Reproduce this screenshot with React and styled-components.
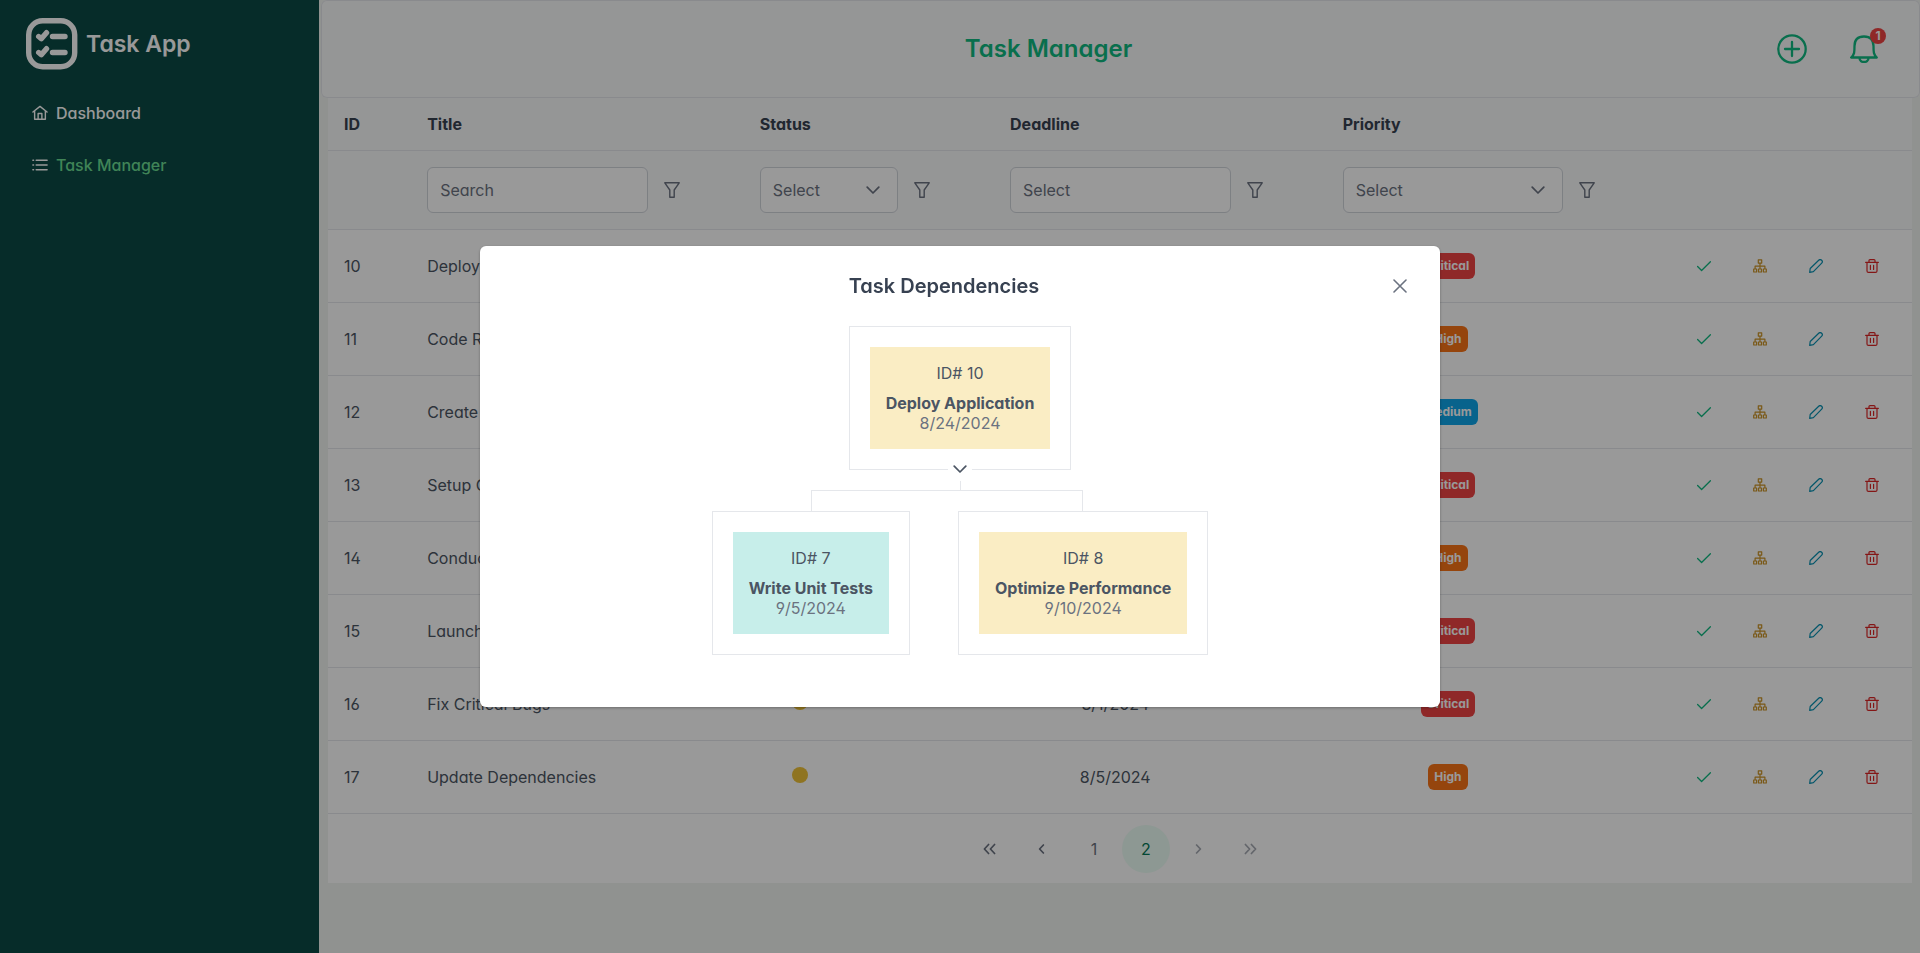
import React from "react";
import styled, { createGlobalStyle } from "styled-components";

const Global = createGlobalStyle`
  *, *::before, *::after { box-sizing: border-box; }
  body {
    margin: 0;
    background: #f1f4f0;
    color: #4b5563;
    font-family: Inter, "Liberation Sans", sans-serif;
    font-feature-settings: "cv02", "cv03", "cv04", "cv11";
    font-size: 16px;
    line-height: 24px;
  }
  button, input, select {
    font: inherit;
    font-feature-settings: inherit;
    color: inherit;
  }
`;

const Shell = styled.div`
  display: flex;
  min-height: 100vh;
`;

const Sidebar = styled.aside`
  flex: none;
  width: 319px;
  padding: 18px 26px;
  background: #0a4a45;
  color: #ffffff;
`;

const Brand = styled.div`
  display: flex;
  align-items: center;
  gap: 8px;
  height: 52px;
  margin-bottom: 17px;
  font-size: 23px;
  font-weight: 600;
`;

const Nav = styled.nav`
  display: flex;
  flex-direction: column;
`;

const NavLink = styled.a`
  display: flex;
  align-items: center;
  gap: 8px;
  height: 52px;
  padding: 0 6px;
  color: #ffffff;
  font-weight: 500;
  text-decoration: none;
  span { color: ${(p) => (p.$active ? "#6bdc92" : "inherit")}; }
`;

const Main = styled.main`
  flex: 1;
  min-width: 0;
  padding-left: 2px;
`;

const TopBar = styled.header`
  display: flex;
  align-items: center;
  height: 98px;
  padding: 0 20px;
  border-radius: 6px;
  background: #f9fafb;
  box-shadow: inset 0 0 0 1px #e5e7eb;
`;

const PageTitle = styled.h1`
  flex: 1;
  margin: 0;
  color: #10b981;
  font-size: 24px;
  font-weight: 600;
  text-align: center;
`;

const BarButton = styled.button`
  display: flex;
  justify-content: center;
  align-items: center;
  width: 72px;
  height: 56px;
  padding: 0;
  border: 0;
  background: transparent;
  color: #10b981;
`;

const BellWrap = styled.span`
  position: relative;
  display: flex;
`;

const Badge = styled.span`
  position: absolute;
  top: -7px;
  right: -8px;
  width: 16px;
  height: 16px;
  border-radius: 50%;
  background: #ef4444;
  color: #ffffff;
  font-size: 12px;
  font-weight: 700;
  line-height: 16px;
  text-align: center;
`;

const Card = styled.section`
  margin: 0 8px 0 7px;
  background: #ffffff;
`;

const Table = styled.table`
  width: 100%;
  table-layout: fixed;
  border-collapse: separate;
  border-spacing: 0;
`;

const HeadCell = styled.th`
  height: ${(p) => (p.$filter ? 79 : 53)}px;
  padding: 0 16px;
  border-bottom: 1px solid #e5e7eb;
  background: #f9fafb;
  color: #374151;
  font-weight: ${(p) => (p.$filter ? 400 : 700)};
  text-align: left;
`;

const Cell = styled.td`
  height: 73px;
  padding: 0 16px;
  border-bottom: 1px solid #e5e7eb;
`;

const Centered = styled.div`
  display: flex;
  justify-content: center;
  width: ${(p) => (p.$narrow ? "80px" : "70%")};
`;

const Dot = styled.span`
  width: 16px;
  height: 16px;
  margin-bottom: 4px;
  border-radius: 50%;
  background: #eec137;
`;

const Tag = styled.span`
  padding: 4px 6px;
  border-radius: 6px;
  background: ${(p) => p.$color};
  color: #ffffff;
  font-size: 12px;
  font-weight: 700;
  line-height: 18px;
`;

const Filter = styled.div`
  display: flex;
  align-items: center;
  padding-right: 32px;
`;

const Field = styled.div`
  position: relative;
  flex: 1;
  min-width: 0;
  color: #6b7280;
  svg {
    position: absolute;
    top: 16px;
    right: 18px;
    pointer-events: none;
  }
`;

const TextInput = styled.input`
  display: block;
  width: 100%;
  height: 46px;
  padding: 0 12px;
  border: 1px solid #d1d5db;
  border-radius: 6px;
  background: #ffffff;
  &::placeholder { color: #6b7280; opacity: 1; }
`;

const SelectInput = styled.select`
  display: block;
  width: 100%;
  height: 46px;
  padding: 0 12px;
  border: 1px solid #d1d5db;
  border-radius: 6px;
  background: #ffffff;
  appearance: none;
`;

const IconButton = styled.button`
  display: flex;
  justify-content: center;
  align-items: center;
  flex: none;
  width: 48px;
  height: 40px;
  padding: 0;
  border: 0;
  background: transparent;
  color: ${(p) => p.$color || "#6b7280"};
`;

const Actions = styled.div`
  display: flex;
  justify-content: flex-end;
  gap: 8px;
`;

const Paginator = styled.nav`
  display: flex;
  justify-content: center;
  align-items: center;
  gap: 4px;
  height: 69px;
`;

const PageButton = styled.button`
  display: flex;
  justify-content: center;
  align-items: center;
  width: 48px;
  height: 48px;
  padding: 0;
  border: 0;
  border-radius: 50%;
  background: ${(p) => (p.$active ? "#ecfdf5" : "transparent")};
  color: ${(p) => (p.$active ? "#047857" : "#6b7280")};
  &:disabled { opacity: 0.6; }
`;

const Mask = styled.div`
  position: fixed;
  inset: 0;
  display: flex;
  justify-content: center;
  align-items: center;
  background: rgba(0, 0, 0, 0.4);
`;

const Dialog = styled.div`
  width: 50%;
  border-radius: 6px;
  background: #ffffff;
  box-shadow: 0 1px 3px rgba(0, 0, 0, 0.3);
`;

const DialogHeader = styled.header`
  display: flex;
  align-items: center;
  height: 80px;
  padding: 0 16px;
`;

const DialogTitle = styled.h2`
  flex: 1;
  margin: 0;
  padding-left: 16px;
  color: #374151;
  font-size: 20px;
  font-weight: 600;
  text-align: center;
`;

const Chart = styled.div`
  display: flex;
  flex-direction: column;
  align-items: center;
  padding-bottom: 52px;
`;

const Node = styled.div`
  position: relative;
  padding: 20px;
  border: 1px solid #e5e7eb;
`;

const NodeBody = styled.div`
  padding: 16px;
  background: ${(p) => p.$color};
  line-height: 20px;
  text-align: center;
`;

const NodeId = styled.div`
  margin-bottom: 10px;
`;

const NodeName = styled.div`
  font-weight: 700;
`;

const NodeDate = styled.div`
  color: #6b7280;
`;

const Toggler = styled.button`
  position: absolute;
  bottom: -12px;
  left: 50%;
  z-index: 1;
  display: flex;
  justify-content: center;
  align-items: center;
  width: 24px;
  height: 24px;
  margin-left: -12px;
  padding: 0;
  border: 0;
  border-radius: 50%;
  background: #ffffff;
`;

const Stem = styled.div`
  width: 1px;
  height: 20px;
  background: #e5e7eb;
`;

const Branches = styled.div`
  display: flex;
`;

const Branch = styled.div`
  display: flex;
  flex-direction: column;
  align-items: center;
  & > ${Node} { margin: 0 24px; }
`;

const Elbow = styled.div`
  align-self: ${(p) => (p.$side === "left" ? "flex-end" : "flex-start")};
  width: 50%;
  height: 21px;
  border-top: 1px solid #e5e7eb;
  border-left: ${(p) => (p.$side === "left" ? "1px solid #e5e7eb" : "0")};
  border-right: ${(p) => (p.$side === "right" ? "1px solid #e5e7eb" : "0")};
`;

const Icon = ({ size = 14, width = 1, box = 14, children }) => (
  <svg width={size} height={size} viewBox={`0 0 ${box} ${box}`} fill="none" stroke="currentColor"
    strokeWidth={width} strokeLinecap="round" strokeLinejoin="round" aria-hidden="true">
    {children}
  </svg>
);

const Logo = () => (
  <Icon size={52} box={52} width={5.4}>
    <rect x="2.700" y="2.700" width="46" height="46" rx="14" />
    <path d="M12.700 18.500l2.600 2.200 5.200-6M12.700 34.500l2.600 2.200 5.200-6M26.500 18.500h12.500M26.500 34.500h12.500" />
  </Icon>
);
const HomeIcon = () => (
  <Icon size={16} box={17} width={1.500}>
    <path d="M1 7.500L8.500 1.500 16 7.500M2.800 6.300V15.200H14.200V6.300M6.500 15V9h4v6" />
  </Icon>
);
const ListIcon = () => (
  <Icon size={16} box={17} width={1.700}>
    <path d="M4.500 3.500H16M4.500 8.500H16M4.500 13.500H16M1 3.500h.6M1 8.500h.6M1 13.500h.6" />
  </Icon>
);
const PlusIcon = () => (
  <Icon size={30} box={30} width={2.300}>
    <circle cx="15" cy="15" r="13.700" />
    <path d="M15 8v14M8 15h14" />
  </Icon>
);
const BellIcon = () => (
  <Icon size={28} box={28} width={2.300}>
    <path d="M1.200 22.500H26.800C23.500 19.500 23.500 17 23.500 11 23.500 5 20 1.500 14 1.500S4.500 5 4.500 11C4.500 17 4.500 19.500 1.200 22.500ZM9.500 23c0 5.300 9 5.300 9 0" />
  </Icon>
);
const FunnelIcon = () => (
  <Icon size={16} box={16} width={1.400}>
    <path d="M.8.8H15.200L10.200 8V15.200H5.800V8Z" />
  </Icon>
);
const ChevronDown = () => (
  <Icon width={1.700}><path d="M1.200 4.200L7 10l5.800-5.800" /></Icon>
);
const CloseIcon = () => (
  <Icon width={1.600}><path d="M1 1l12 12M13 1L1 13" /></Icon>
);
const CheckIcon = () => (
  <Icon width={1.300}><path d="M.6 7.500L4.600 11.500 13.400 2.700" /></Icon>
);
const TreeIcon = () => (
  <Icon width={1.200}>
    <path d="M5.300.8h3.400v3.300H5.300zM.7 10h2.900v3H.7zM5.500 10h3v3h-3zM10.400 10h2.900v3h-2.900zM7 4.200V10M2.100 10V7.200h9.800V10" />
  </Icon>
);
const PencilIcon = () => (
  <Icon width={1.200}>
    <path d="M.7 13.300l.5-3.800L9.700 1.200c1.900-1.800 4.900 1 3 3L4.400 12.700z" />
  </Icon>
);
const TrashIcon = () => (
  <Icon width={1.200}>
    <path d="M.6 3.300h12.800M4 3V1.600c0-.6.4-1 1-1h4c.6 0 1 .4 1 1V3M2 3.500v8.400c0 .9.600 1.500 1.500 1.500h7c.9 0 1.500-.6 1.500-1.500V3.500M5.400 6.400v4M8.600 6.400v4" />
  </Icon>
);
const AngleIcon = ({ double, right }) => (
  <Icon width={1.700}>
    <g transform={right ? "rotate(180 7 7)" : undefined}>
      <path d={double ? "M5.600 2.500L1.400 7l4.200 4.500M11.600 2.500L7.400 7l4.200 4.500" : "M8.400 3L4.600 7l3.800 4"} />
    </g>
  </Icon>
);

const PRIORITY_COLORS = { Critical: "#ef4444", High: "#f97316", Medium: "#0ea5e9" };

const TASKS = [
  [10, "Deploy Application", "8/24/2024", "Critical"],
  [11, "Code Review", "8/27/2024", "High"],
  [12, "Create Documentation", "8/30/2024", "Medium"],
  [13, "Setup CI/CD", "8/15/2024", "Critical"],
  [14, "Conduct Testing", "8/20/2024", "High"],
  [15, "Launch Product", "9/1/2024", "Critical"],
  [16, "Fix Critical Bugs", "8/1/2024", "Critical"],
  [17, "Update Dependencies", "8/5/2024", "High"],
];

const COLUMNS = [
  { name: "ID", width: "5.25%" },
  { name: "Title", width: "21%", filter: "text", hint: "Search" },
  { name: "Status", width: "15.8%", filter: "select", hint: "Select" },
  { name: "Deadline", width: "21%", filter: "text", hint: "Select" },
  { name: "Priority", width: "21%", filter: "select", hint: "Select" },
  { name: "", width: "auto" },
];

const Column = styled.col`
  width: ${(p) => p.$width};
`;

const ColumnFilter = ({ column }) => (
  <Filter>
    <Field>
      {column.filter === "text" ? (
        <TextInput type="text" placeholder={column.hint} aria-label={`Filter by ${column.name}`} />
      ) : (
        <>
          <SelectInput aria-label={`Filter by ${column.name}`}>
            <option>{column.hint}</option>
          </SelectInput>
          <ChevronDown />
        </>
      )}
    </Field>
    <IconButton type="button" aria-label={`${column.name} filter options`}><FunnelIcon /></IconButton>
  </Filter>
);

const TaskNode = ({ id, name, date, color, children }) => (
  <Node>
    <NodeBody $color={color}>
      <NodeId>ID# {id}</NodeId>
      <NodeName>{name}</NodeName>
      <NodeDate>{date}</NodeDate>
    </NodeBody>
    {children}
  </Node>
);

export default function App() {
  return (
    <>
      <Global />
      <Shell>
        <Sidebar>
          <Brand><Logo />Task App</Brand>
          <Nav aria-label="Main">
            <NavLink href="#dashboard"><HomeIcon /><span>Dashboard</span></NavLink>
            <NavLink href="#tasks" $active aria-current="page"><ListIcon /><span>Task Manager</span></NavLink>
          </Nav>
        </Sidebar>
        <Main>
          <TopBar>
            <PageTitle>Task Manager</PageTitle>
            <BarButton type="button" aria-label="Add task"><PlusIcon /></BarButton>
            <BarButton type="button" aria-label="Notifications">
              <BellWrap><BellIcon /><Badge>1</Badge></BellWrap>
            </BarButton>
          </TopBar>
          <Card>
            <Table>
              <colgroup>
                {COLUMNS.map((c) => <Column key={c.name} $width={c.width} />)}
              </colgroup>
              <thead>
                <tr>{COLUMNS.map((c) => <HeadCell key={c.name}>{c.name}</HeadCell>)}</tr>
                <tr>
                  {COLUMNS.map((c) => (
                    <HeadCell key={c.name} $filter>{c.filter && <ColumnFilter column={c} />}</HeadCell>
                  ))}
                </tr>
              </thead>
              <tbody>
                {TASKS.map(([id, title, deadline, priority]) => (
                  <tr key={id}>
                    <Cell>{id}</Cell>
                    <Cell>{title}</Cell>
                    <Cell><Centered $narrow><Dot /></Centered></Cell>
                    <Cell><Centered>{deadline}</Centered></Cell>
                    <Cell><Centered><Tag $color={PRIORITY_COLORS[priority]}>{priority}</Tag></Centered></Cell>
                    <Cell>
                      <Actions>
                        <IconButton type="button" $color="#10b981" aria-label="Complete"><CheckIcon /></IconButton>
                        <IconButton type="button" $color="#cc9427" aria-label="Dependencies"><TreeIcon /></IconButton>
                        <IconButton type="button" $color="#0891b2" aria-label="Edit"><PencilIcon /></IconButton>
                        <IconButton type="button" $color="#dc2626" aria-label="Delete"><TrashIcon /></IconButton>
                      </Actions>
                    </Cell>
                  </tr>
                ))}
              </tbody>
            </Table>
            <Paginator aria-label="Pages">
              <PageButton type="button" aria-label="First page"><AngleIcon double /></PageButton>
              <PageButton type="button" aria-label="Previous page"><AngleIcon /></PageButton>
              <PageButton type="button">1</PageButton>
              <PageButton type="button" $active aria-current="page">2</PageButton>
              <PageButton type="button" disabled aria-label="Next page"><AngleIcon right /></PageButton>
              <PageButton type="button" disabled aria-label="Last page"><AngleIcon double right /></PageButton>
            </Paginator>
          </Card>
        </Main>
      </Shell>
      <Mask>
        <Dialog role="dialog" aria-modal="true" aria-labelledby="dialog-title">
          <DialogHeader>
            <DialogTitle id="dialog-title">Task Dependencies</DialogTitle>
            <IconButton type="button" aria-label="Close"><CloseIcon /></IconButton>
          </DialogHeader>
          <Chart>
            <TaskNode id={10} name="Deploy Application" date="8/24/2024" color="#faedc4">
              <Toggler type="button" aria-label="Collapse"><ChevronDown /></Toggler>
            </TaskNode>
            <Stem />
            <Branches>
              <Branch>
                <Elbow $side="left" />
                <TaskNode id={7} name="Write Unit Tests" date="9/5/2024" color="#c7eeea" />
              </Branch>
              <Branch>
                <Elbow $side="right" />
                <TaskNode id={8} name="Optimize Performance" date="9/10/2024" color="#faedc4" />
              </Branch>
            </Branches>
          </Chart>
        </Dialog>
      </Mask>
    </>
  );
}
